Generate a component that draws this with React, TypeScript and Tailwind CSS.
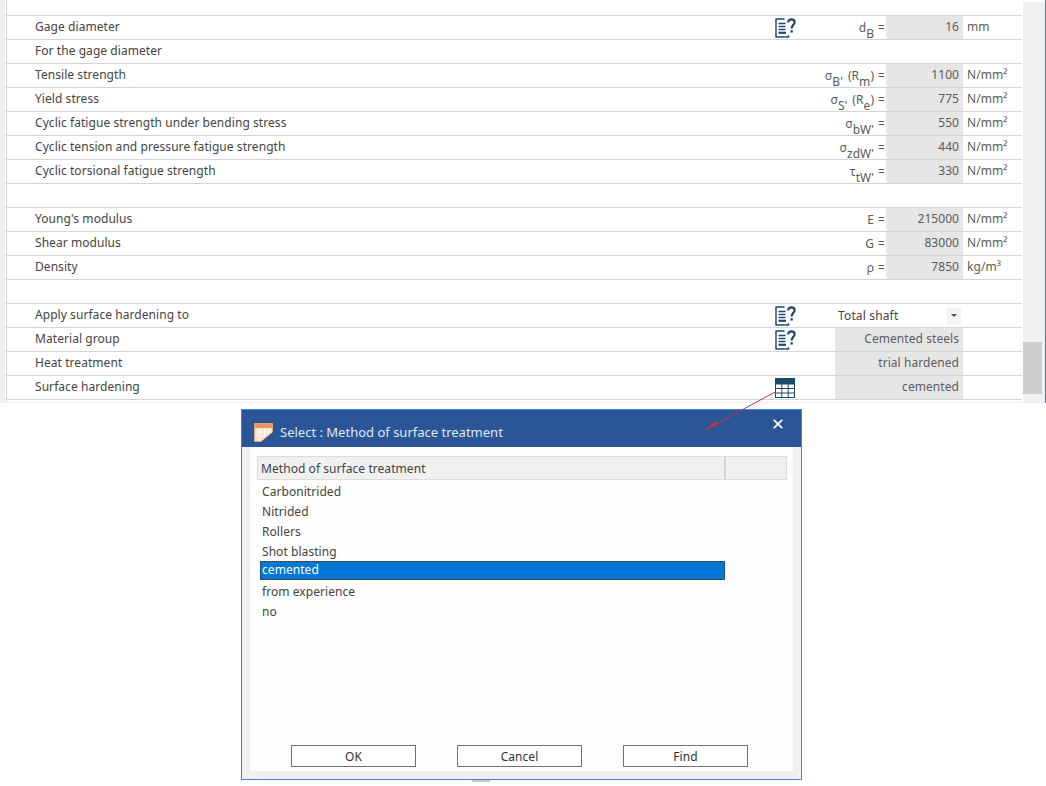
const font = "font-['Noto_Sans','Open_Sans',sans-serif]";

function HelpIcon() {
  return (
    <svg width="21" height="20" viewBox="0 0 21 20" className="shrink-0">
      <path d="M9.5 1H1V19H13.5V17" fill="none" stroke="#1b4b68" strokeWidth="1.4" />
      <path d="M3.5 5.5H10.5M3.5 8.5H10.5M3.5 11.5H10.5" stroke="#1b4b68" strokeWidth="1.4" />
      <path d="M3.5 14.8H11" stroke="#1b4b68" strokeWidth="2.2" />
      <path d="M13.2 4.6C13.2 2.4 14.6 1.3 16.4 1.3C18.2 1.3 19.6 2.4 19.6 4.4C19.6 6.6 16.6 7.2 16.6 10.4" fill="none" stroke="#1b4b68" strokeWidth="2.2" />
      <rect x="15.5" y="12.2" width="2.3" height="2.4" fill="#1b4b68" />
    </svg>
  );
}

function TableIcon() {
  return (
    <svg width="20" height="20" viewBox="0 0 20 20" className="shrink-0">
      <rect x="0.5" y="0.5" width="19" height="19" fill="#fff" stroke="#1b4b68" />
      <rect x="0.5" y="0.5" width="19" height="6" fill="#1b4b68" />
      <path d="M0.5 10.5H19.5M0.5 15H19.5M6.8 6V19M13.2 6V19" stroke="#1b4b68" strokeWidth="1" />
    </svg>
  );
}

function Sub({ base, sub }: { base: string; sub: string }) {
  return (
    <span>
      {base}
      <sub className="text-[12px] leading-none align-[-3px]">{sub}</sub>
    </span>
  );
}

function Sym({ children }: { children: React.ReactNode }) {
  return (
    <span className="flex items-baseline whitespace-nowrap">
      {children}
      <span className="ml-[4px]">=</span>
    </span>
  );
}

type Row = {
  label?: string;
  icon?: "help" | "table";
  symbol?: React.ReactNode;
  value?: string;
  unit?: string;
  wide?: boolean;
  combo?: boolean;
};

const rows: Row[] = [
  { label: "Gage diameter", icon: "help", symbol: <Sym><Sub base="d" sub="B" /></Sym>, value: "16", unit: "mm" },
  { label: "For the gage diameter" },
  { label: "Tensile strength", symbol: <Sym><Sub base="σ" sub="B'" /><span className="ml-[5px]">(</span><Sub base="R" sub="m" />)</Sym>, value: "1100", unit: "N/mm²" },
  { label: "Yield stress", symbol: <Sym><Sub base="σ" sub="S'" /><span className="ml-[5px]">(</span><Sub base="R" sub="e" />)</Sym>, value: "775", unit: "N/mm²" },
  { label: "Cyclic fatigue strength under bending stress", symbol: <Sym><Sub base="σ" sub="bW'" /></Sym>, value: "550", unit: "N/mm²" },
  { label: "Cyclic tension and pressure fatigue strength", symbol: <Sym><Sub base="σ" sub="zdW'" /></Sym>, value: "440", unit: "N/mm²" },
  { label: "Cyclic torsional fatigue strength", symbol: <Sym><Sub base="τ" sub="tW'" /></Sym>, value: "330", unit: "N/mm²" },
  {},
  { label: "Young's modulus", symbol: <Sym>E</Sym>, value: "215000", unit: "N/mm²" },
  { label: "Shear modulus", symbol: <Sym>G</Sym>, value: "83000", unit: "N/mm²" },
  { label: "Density", symbol: <Sym>ρ</Sym>, value: "7850", unit: "kg/m³" },
  {},
  { label: "Apply surface hardening to", icon: "help", combo: true },
  { label: "Material group", icon: "help", value: "Cemented steels", wide: true },
  { label: "Heat treatment", value: "trial hardened", wide: true },
  { label: "Surface hardening", icon: "table", value: "cemented", wide: true },
];

function TableRow({ r }: { r: Row }) {
  const wideIcon = r.combo || r.wide;
  return (
    <div className="flex h-6 items-stretch border-b border-[#d4d4d4]">
      <div className="w-[28px] shrink-0" />
      <div className="flex-1 flex items-center pb-[2px] truncate">{r.label}</div>
      <div className={`${wideIcon ? "w-[60px]" : "w-[28px]"} shrink-0 flex items-center`}>
        {r.icon === "help" && <HelpIcon />}
        {r.icon === "table" && <TableIcon />}
      </div>
      {r.combo ? (
        <>
          <div className="w-[128px] shrink-0 flex items-center justify-between pl-[3px] pr-[2px]">
            <span className="tracking-[0.15px]">Total shaft</span>
            <span className="w-[14px] h-[16px] bg-[#f3f3f3] flex items-center justify-center">
              <span className="w-0 h-0 border-l-[3px] border-r-[3px] border-t-[3px] border-l-transparent border-r-transparent border-t-[#555]" />
            </span>
          </div>
          <div className="w-[59px] shrink-0" />
        </>
      ) : r.wide ? (
        <>
          <div className="w-[128px] shrink-0 bg-[#e6e6e6] flex items-center justify-end pr-[4px] pb-[1px] text-[#5c5c5c]">{r.value}</div>
          <div className="w-[59px] shrink-0" />
        </>
      ) : (
        <>
          <div className="w-[83px] shrink-0 flex items-center justify-end pr-[1px] pt-[1px] text-[#5c5c5c]">{r.symbol}</div>
          {r.value ? (
            <div className="w-[77px] shrink-0 bg-[#e6e6e6] flex items-center justify-end pr-[4px] pb-[1px] text-[#5c5c5c]">{r.value}</div>
          ) : (
            <div className="w-[77px] shrink-0" />
          )}
          <div className="w-[59px] shrink-0 flex items-center pl-[4px] pb-[1px] text-[#5c5c5c]">{r.unit}</div>
        </>
      )}
    </div>
  );
}

const items = ["Carbonitrided", "Nitrided", "Rollers", "Shot blasting"];

function Btn({ children }: { children: React.ReactNode }) {
  return (
    <button className="w-[125px] h-[22px] bg-white border border-[#707070] flex items-center justify-center pt-[1px] text-[12px] text-[#333]">
      {children}
    </button>
  );
}

export default function App() {
  return (
    <div className={`${font} relative w-[1046px] h-[786px] bg-white overflow-hidden text-[12px] tracking-[0.06px] text-[#444]`}>
      <div className="flex h-[403px]">
        <div className="w-[5px] shrink-0 bg-[#efefef]" />
        <div className="w-[1px] shrink-0 bg-white" />
        <div className="w-[1px] shrink-0 bg-[#d0d0d0]" />
        <div className="flex-1 min-w-0 -ml-[1px] pl-[1px] border-b border-[#ededed]">
          <div className="h-[16px] border-b border-[#d4d4d4]" />
          {rows.map((r, i) => (
            <TableRow key={i} r={r} />
          ))}
        </div>
        <div className="w-[1px] shrink-0" />
        <div className="w-[22px] shrink-0 bg-[#f0f0f0] mt-[2px] flex flex-col pt-[340px]">
          <div className="w-[19px] h-[52px] bg-[#cdcdcd]" />
        </div>
        <div className="w-[1px] shrink-0 bg-[#3f78c4]" />
      </div>

      <div className="ml-[241px] mt-[6px] w-[561px] h-[371px] border border-[#3f86d8] bg-[#f0f0f0] flex flex-col">
        <div className="h-[37px] shrink-0 bg-[#2a5597] flex items-start pl-[12px] pr-[18px] text-[#dfe8f4]">
          <svg width="19" height="19" viewBox="0 0 19 19" className="shrink-0 mt-[13px]">
            <path d="M0.5 0.5H18.5V9L7 18.5H0.5Z" fill="#fbe0cf" stroke="#eaa27a" />
            <path d="M0.5 0.5H18.5V5H0.5Z" fill="#ea9464" />
            <path d="M1 9H18M1 13H11M5.5 5V18M10.5 5V14M15 5V10" stroke="#fff" strokeWidth="1" />
          </svg>
          <span className="ml-[7px] mt-[13px] text-[13px] tracking-normal flex-1">Select : Method of surface treatment</span>
          <svg width="10" height="10" viewBox="0 0 10 10" className="mt-[9px]">
            <path d="M0.8 0.8L9.2 9.2M9.2 0.8L0.8 9.2" stroke="#fff" strokeWidth="1.7" />
          </svg>
        </div>
        <div className="flex-1 min-h-0 mx-[8px] mb-[8px] bg-[#fdfdfd] flex flex-col">
          <div className="mt-[9px] ml-[7px] w-[530px] h-[24px] bg-[#f0f0f0] border border-[#dcdcdc] flex items-center shrink-0">
            <div className="w-[468px] pl-[3px] h-full flex items-center border-r-2 border-[#d4d4d4] pt-[1px]">Method of surface treatment</div>
          </div>
          <div className="flex flex-col ml-[10px] w-[465px]">
            {items.map((t) => (
              <div key={t} className="h-[20px] flex items-center pl-[2px] pt-[3px]">{t}</div>
            ))}
            <div className="h-[19px] mt-[1px] bg-[#0078d7] border border-dotted border-[#333] text-white flex items-center pl-[1px] pb-[2px]">cemented</div>
            <div className="h-[20px] flex items-center pl-[2px] mt-[1px] pt-[1px]">from experience</div>
            <div className="h-[20px] flex items-center pl-[2px] pt-[1px]">no</div>
          </div>
          <div className="mt-auto flex pl-[41px] gap-[41px] pb-[4px]">
            <Btn>OK</Btn>
            <Btn>Cancel</Btn>
            <Btn>Find</Btn>
          </div>
        </div>
      </div>
      <div className="ml-[472px] w-[18px] h-[2px] bg-[#c8c8c8]" />

      <svg width="90" height="50" viewBox="0 0 90 50" className="absolute left-[695px] top-[388px] pointer-events-none">
        <path d="M80 4L10 42" stroke="#c2334d" strokeWidth="1" />
        <path d="M10 42L21 33L23 37Z" fill="#c2334d" />
      </svg>
    </div>
  );
}
